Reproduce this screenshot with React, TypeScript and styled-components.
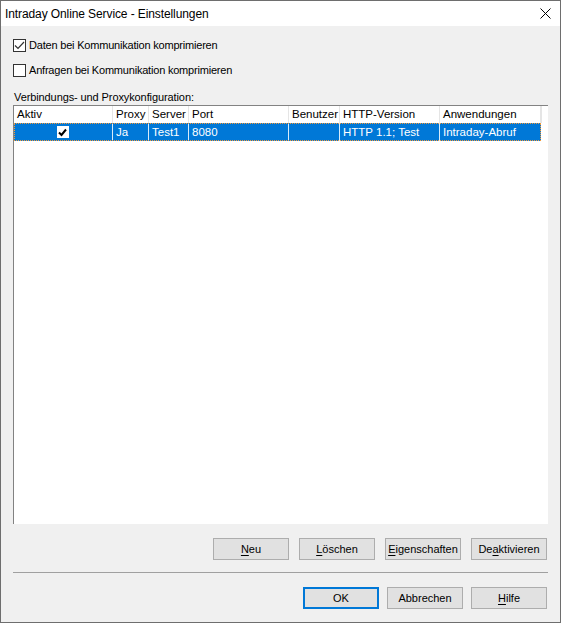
import React from 'react';
import styled, { createGlobalStyle } from 'styled-components';

const GlobalStyle = createGlobalStyle`
  html, body {
    margin: 0;
    padding: 0;
    background: #f0f0f0;
  }
  * {
    box-sizing: border-box;
  }
`;

const FONT = `"Liberation Sans", Arial, sans-serif`;

const Window = styled.div`
  width: 561px;
  height: 623px;
  border: 1px solid #6e6e6e;
  background: #f0f0f0;
  display: flex;
  flex-direction: column;
  font-family: ${FONT};
  font-size: 11px;
  color: #000;
`;

const TitleBar = styled.div`
  height: 25px;
  background: #fff;
  display: flex;
  align-items: center;
  justify-content: space-between;
  padding-left: 4px;
  padding-right: 9px;
`;

const Title = styled.span`
  font-size: 12px;
  line-height: 14px;
  padding-top: 1px;
  letter-spacing: -0.1px;
`;

const Body = styled.div`
  flex: 1;
  display: flex;
  flex-direction: column;
  padding: 0 12px;
`;

const CheckRow = styled.label<{ $top: number }>`
  display: flex;
  align-items: center;
  gap: 3px;
  height: 13px;
  margin-top: ${(p) => p.$top}px;
  line-height: 13px;
  letter-spacing: -0.2px;
`;

const Box = styled.span`
  width: 13px;
  height: 13px;
  border: 1px solid #333;
  background: #fff;
  display: flex;
  align-items: center;
  justify-content: center;
`;

const GroupLabel = styled.div`
  margin-top: 13px;
  line-height: 14px;
  height: 14px;
  padding-left: 1px;
  letter-spacing: -0.1px;
`;

const List = styled.div`
  margin-top: 1px;
  height: 419px;
  background: #fff;
  border-top: 1px solid #828282;
  border-left: 1px solid #828282;
  font-size: 11.5px;
`;

const GridRow = styled.div`
  display: grid;
  grid-template-columns: 99px 36px 40px 100px 51px 100px 101px;
`;

const HeaderRow = styled(GridRow)`
  height: 17px;
  margin-right: 6px;
  border-right: 1px solid #e5e5e5;
`;

const HeadCell = styled.div`
  border-right: 1px solid #e5e5e5;
  padding-left: 3px;
  line-height: 17px;
  white-space: nowrap;
  overflow: hidden;
`;

const DataRow = styled(GridRow)`
  height: 18px;
  width: 527px;
  background: #0078d7;
  color: #fff;
  outline: 1px dotted #f39a3a;
  outline-offset: -1px;
`;

const Cell = styled.div<{ $center?: boolean }>`
  border-right: 1px solid rgba(255, 255, 255, 0.85);
  padding-left: 3px;
  line-height: 18px;
  white-space: nowrap;
  overflow: hidden;
  display: flex;
  align-items: center;
  justify-content: ${(p) => (p.$center ? 'center' : 'flex-start')};
  &:last-child {
    border-right: none;
  }
`;

const MiniCheck = styled.span`
  width: 12px;
  height: 12px;
  background: #fff;
  display: flex;
  align-items: center;
  justify-content: center;
  margin-left: -4px;
`;

const ButtonRow = styled.div<{ $top: number; $gap: number }>`
  display: flex;
  justify-content: flex-end;
  gap: ${(p) => p.$gap}px;
  margin-top: ${(p) => p.$top}px;
  padding-right: 1px;
`;

const Button = styled.button<{ $default?: boolean }>`
  width: 76px;
  height: 22px;
  padding: 0;
  font-family: ${FONT};
  font-size: 11px;
  color: #000;
  background: #e1e1e1;
  border: 1px solid ${(p) => (p.$default ? '#0078d7' : '#adadad')};
  box-shadow: ${(p) => (p.$default ? 'inset 0 0 0 1px #0078d7' : 'none')};
  u {
    text-decoration-thickness: 1px;
    text-underline-offset: 2px;
  }
`;

const Separator = styled.div`
  margin-top: 12px;
  height: 1px;
  background: #a0a0a0;
`;

const CheckMark = ({ color = '#333' }: { color?: string }) => (
  <svg width="11" height="11" viewBox="0 0 11 11">
    <path d="M1 5.5 L4 8.5 L10 2" fill="none" stroke={color} strokeWidth="1.2" />
  </svg>
);

const SmallCheck = () => (
  <svg width="9" height="9" viewBox="0 0 9 9">
    <path d="M1 4.5 L3.5 7 L8 1.5" fill="none" stroke="#000" strokeWidth="2" />
  </svg>
);

const CloseIcon = () => (
  <svg width="11" height="11" viewBox="0 0 11 11">
    <path d="M0.5 0.5 L10.5 10.5 M10.5 0.5 L0.5 10.5" stroke="#000" strokeWidth="1" />
  </svg>
);

const headers = ['Aktiv', 'Proxy', 'Server', 'Port', 'Benutzer', 'HTTP-Version', 'Anwendungen'];

export default function App() {
  return (
    <>
      <GlobalStyle />
      <Window>
        <TitleBar>
          <Title>Intraday Online Service - Einstellungen</Title>
          <CloseIcon />
        </TitleBar>
        <Body>
          <CheckRow $top={13}>
            <Box>
              <CheckMark />
            </Box>
            Daten bei Kommunikation komprimieren
          </CheckRow>
          <CheckRow $top={12}>
            <Box />
            Anfragen bei Kommunikation komprimieren
          </CheckRow>
          <GroupLabel>Verbindungs- und Proxykonfiguration:</GroupLabel>
          <List>
            <HeaderRow>
              {headers.map((h) => (
                <HeadCell key={h}>{h}</HeadCell>
              ))}
            </HeaderRow>
            <DataRow>
              <Cell $center>
                <MiniCheck>
                  <SmallCheck />
                </MiniCheck>
              </Cell>
              <Cell>Ja</Cell>
              <Cell>Test1</Cell>
              <Cell>8080</Cell>
              <Cell />
              <Cell>HTTP 1.1; Test</Cell>
              <Cell>Intraday-Abruf</Cell>
            </DataRow>
          </List>
          <ButtonRow $top={14} $gap={10}>
            <Button>
              <u>N</u>eu
            </Button>
            <Button>
              <u>L</u>öschen
            </Button>
            <Button>
              <u>E</u>igenschaften
            </Button>
            <Button>
              De<u>a</u>ktivieren
            </Button>
          </ButtonRow>
          <Separator />
          <ButtonRow $top={14} $gap={8}>
            <Button $default>OK</Button>
            <Button>Abbrechen</Button>
            <Button>
              <u>H</u>ilfe
            </Button>
          </ButtonRow>
        </Body>
      </Window>
    </>
  );
}
